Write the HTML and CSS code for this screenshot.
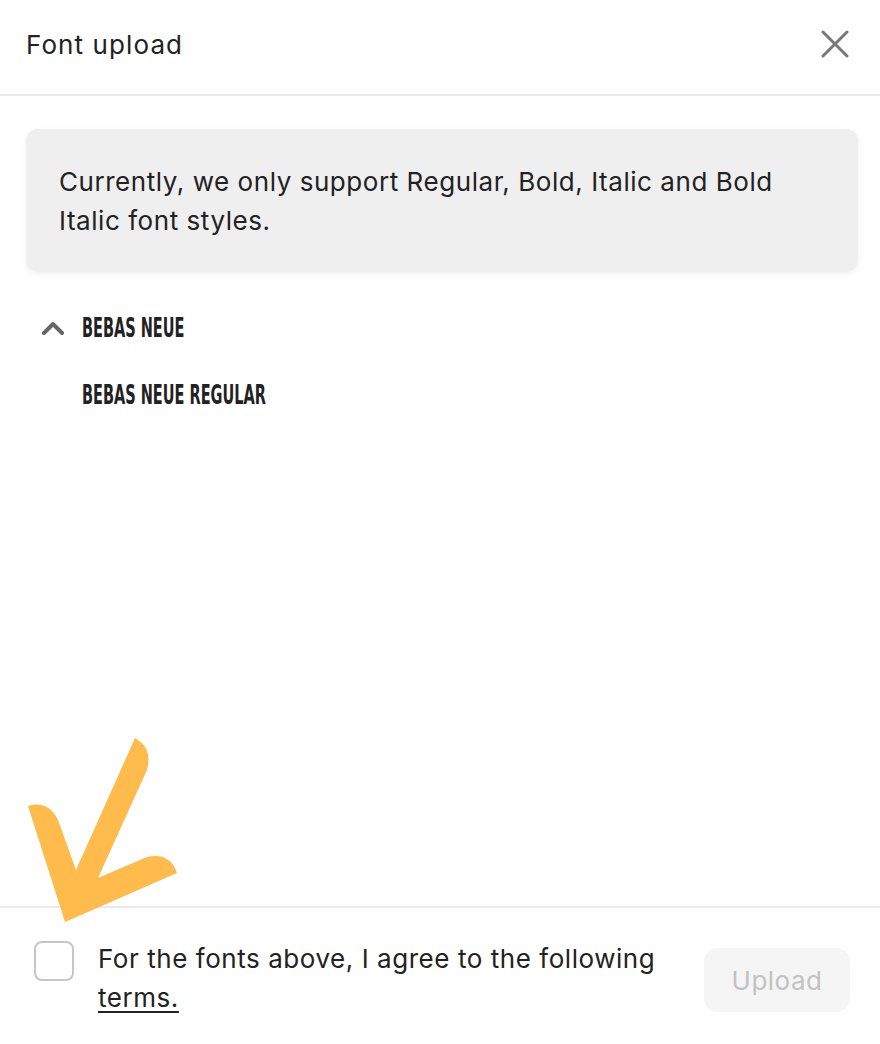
FILE: index.html
```html
<!DOCTYPE html>
<html lang="en">
<head>
<meta charset="utf-8">
<title>Font upload</title>
<link rel="stylesheet" href="styles.css">
</head>
<body>
<div class="dialog">
  <header class="header">
    <h1 class="title">Font upload</h1>
    <button class="close" aria-label="Close">
      <svg width="28" height="28" viewBox="0 0 28 28"><path d="M2 2 L26 26 M26 2 L2 26" stroke="#777" stroke-width="3" stroke-linecap="round" fill="none"/></svg>
    </button>
  </header>
  <main class="content">
    <div class="notice">Currently, we only support Regular, Bold, Italic and Bold Italic font styles.</div>
    <div class="family">
      <div class="family-row">
        <svg class="chevron" width="24" height="14" viewBox="0 0 24 14"><path d="M3 12 L12 3 L21 12" stroke="#666" stroke-width="4" fill="none" stroke-linecap="round" stroke-linejoin="round"/></svg>
        <span class="bebas">Bebas Neue</span>
      </div>
      <div class="style-row"><span class="bebas">Bebas Neue Regular</span></div>
    </div>
  </main>
  <footer class="footer">
    <label class="agree">
      <span class="checkbox"></span>
      <span class="agree-text">For the fonts above, I agree to the following <a href="#" class="terms">terms.</a></span>
    </label>
    <button class="upload" disabled>Upload</button>
  </footer>
  <svg class="arrow" width="200" height="200" viewBox="0 0 200 200">
    <path d="M65 922 L28 806 Q48 800 58 820 L76 870 L135 738 Q153 748 147 770 L98 878 L147 857 Q170 852 177 873 Z" transform="translate(0,-730)" fill="#ffbb4b"/>
  </svg>
</div>
</body>
</html>
```

FILE: styles.css
```css
* { box-sizing: border-box; }
html, body { margin: 0; padding: 0; background: #fff; }
body {
  font-family: Inter, "Noto Sans", "Liberation Sans", sans-serif;
  color: #222;
}
.dialog {
  position: relative;
  width: 880px;
  height: 1044px;
  display: flex;
  flex-direction: column;
}
.header {
  height: 96px;
  border-bottom: 2px solid #ebebeb;
  display: flex;
  align-items: center;
  justify-content: space-between;
  padding: 0 31px 6px 26px;
}
.title {
  margin: 0;
  font-size: 26px;
  font-weight: 400;
  letter-spacing: 1.1px;
}
.close {
  border: 0;
  background: none;
  padding: 0;
  width: 28px;
  height: 28px;
  display: flex;
}
.content {
  flex: 1;
  padding: 33px 22px 0 26px;
}
.notice {
  background: #efefef;
  border-radius: 12px;
  box-shadow: 0 2px 6px rgba(0,0,0,0.06);
  padding: 33px 32px 32px 33px;
  font-size: 26px;
  line-height: 39px;
  letter-spacing: 0.55px;
  color: #222;
}
.family { padding-top: 38px; }
.family-row {
  display: flex;
  align-items: center;
  gap: 17px;
  height: 36px;
  padding-left: 15px;
}
.style-row {
  height: 36px;
  display: flex;
  align-items: center;
  padding-left: 56px;
  margin-top: 31px;
}
.bebas {
  display: inline-block;
  font-family: "DejaVu Sans Condensed", "DejaVu Sans", sans-serif;
  font-weight: 700;
  font-size: 26px;
  text-transform: uppercase;
  transform: scaleX(0.62);
  transform-origin: left center;
  color: #222;
  white-space: nowrap;
}
.footer {
  height: 138px;
  border-top: 2px solid #ebebeb;
  display: flex;
  align-items: flex-start;
  justify-content: space-between;
  padding: 31px 30px 0 34px;
}
.agree {
  display: flex;
  align-items: flex-start;
  gap: 24px;
}
.checkbox {
  width: 40px;
  height: 40px;
  border: 2px solid #c6c6c6;
  border-radius: 8px;
  flex: none;
  margin-top: 2px;
}
.agree-text {
  width: 580px;
  font-size: 26px;
  line-height: 39px;
  letter-spacing: 0.55px;
  color: #222;
}
.terms { color: #222; text-decoration: underline; text-underline-offset: 4px; }
.upload {
  margin-top: 9px;
  width: 146px;
  height: 64px;
  border: 0;
  border-radius: 14px;
  background: #f5f5f5;
  color: #c2c2c2;
  font-family: inherit;
  font-size: 26px;
  letter-spacing: 0.5px;
}
.arrow {
  position: absolute;
  left: 0;
  top: 730px;
}
```
